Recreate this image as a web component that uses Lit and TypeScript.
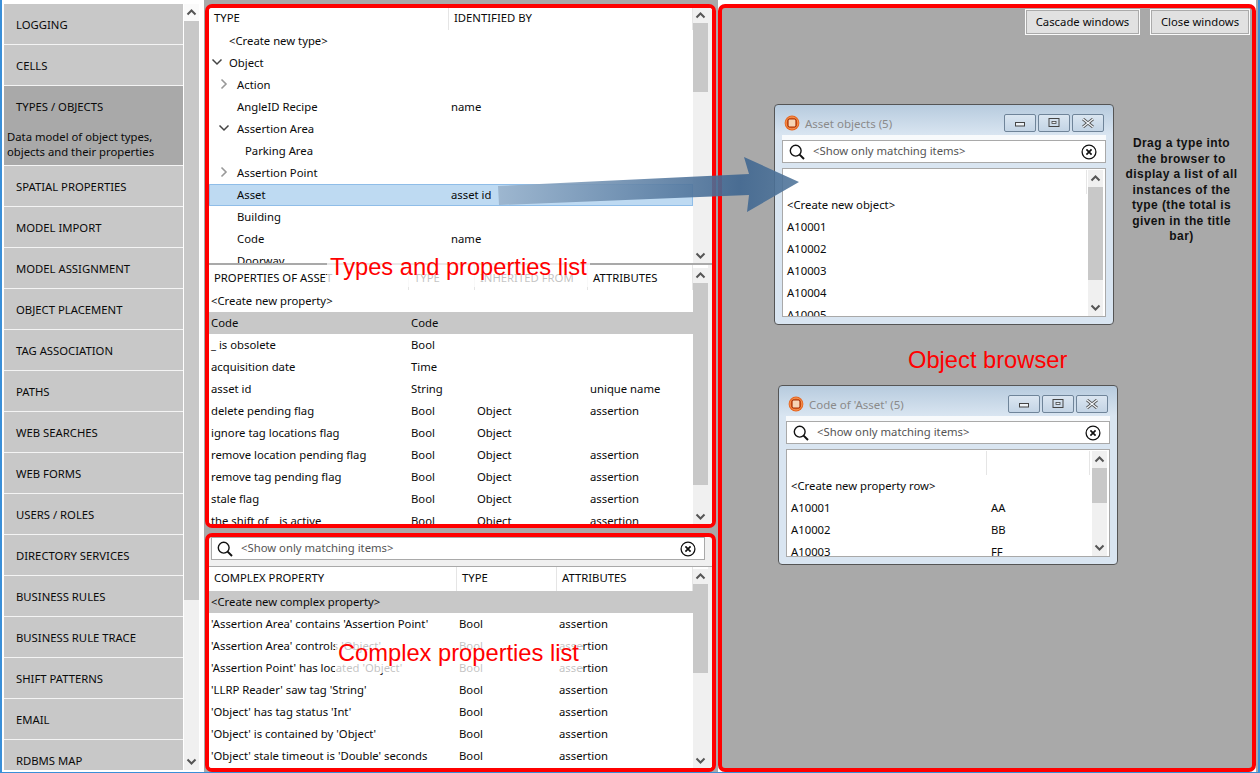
import { LitElement, html, css, svg, nothing } from "lit";
import { customElement } from "lit/decorators.js";

const nav = ["LOGGING","CELLS","TYPES / OBJECTS","SPATIAL PROPERTIES","MODEL IMPORT","MODEL ASSIGNMENT","OBJECT PLACEMENT","TAG ASSOCIATION","PATHS","WEB SEARCHES","WEB FORMS","USERS / ROLES","DIRECTORY SERVICES","BUSINESS RULES","BUSINESS RULE TRACE","SHIFT PATTERNS","EMAIL","RDBMS MAP"];

type Tree = { t: string; v?: string; lvl: number; chev?: "open" | "closed"; sel?: boolean };
const tree: Tree[] = [
  { t: "<Create new type>", lvl: 1 },
  { t: "Object", lvl: 1, chev: "open" },
  { t: "Action", lvl: 2, chev: "closed" },
  { t: "AngleID Recipe", v: "name", lvl: 2 },
  { t: "Assertion Area", lvl: 2, chev: "open" },
  { t: "Parking Area", lvl: 3 },
  { t: "Assertion Point", lvl: 2, chev: "closed" },
  { t: "Asset", v: "asset id", lvl: 2, sel: true },
  { t: "Building", lvl: 2 },
  { t: "Code", v: "name", lvl: 2 },
  { t: "Doorway", lvl: 2 },
];

const props = [
  ["<Create new property>"],
  ["Code","Code","",""],
  ["_ is obsolete","Bool","",""],
  ["acquisition date","Time","",""],
  ["asset id","String","","unique name"],
  ["delete pending flag","Bool","Object","assertion"],
  ["ignore tag locations flag","Bool","Object",""],
  ["remove location pending flag","Bool","Object","assertion"],
  ["remove tag pending flag","Bool","Object","assertion"],
  ["stale flag","Bool","Object","assertion"],
  ["the shift of _ is active","Bool","Object","assertion"],
];

const complex = [
  ["<Create new complex property>"],
  ["'Assertion Area' contains 'Assertion Point'","Bool","assertion"],
  ["'Assertion Area' controls 'Object'","Bool","assertion"],
  ["'Assertion Point' has located 'Object'","Bool","assertion"],
  ["'LLRP Reader' saw tag 'String'","Bool","assertion"],
  ["'Object' has tag status 'Int'","Bool","assertion"],
  ["'Object' is contained by 'Object'","Bool","assertion"],
  ["'Object' stale timeout is 'Double' seconds","Bool","assertion"],
];

const chevUp = html`<svg class="ch" viewBox="0 0 15 15"><path d="M3.5 9.5 7.5 5.5 11.5 9.5" fill="none" stroke="#555" stroke-width="2"/></svg>`;
const chevDown = html`<svg class="ch" viewBox="0 0 15 15"><path d="M3.5 5.5 7.5 9.5 11.5 5.5" fill="none" stroke="#555" stroke-width="2"/></svg>`;

const searchIcon = html`<svg class="mag" viewBox="0 0 16 16"><circle cx="6.7" cy="6.7" r="5.4" fill="none" stroke="#111" stroke-width="1.4"/><path d="M10.6 10.6 15 15" stroke="#111" stroke-width="2"/></svg>`;
const clearIcon = html`<svg class="clr" viewBox="0 0 16 16"><circle cx="8" cy="8" r="6.9" fill="none" stroke="#111" stroke-width="1.3"/><path d="M5.4 5.4 10.6 10.6M10.6 5.4 5.4 10.6" stroke="#111" stroke-width="1.7"/></svg>`;

const appIcon = html`<svg class="appicon" viewBox="0 0 16 16"><circle cx="8" cy="8" r="7.4" fill="#e8641c"/><circle cx="8" cy="8" r="6" fill="none" stroke="#f49a5c" stroke-width="1"/><rect x="4" y="4" width="8" height="8" rx="1.5" fill="#f6d5b4" stroke="#a83206" stroke-width="1.2"/></svg>`;

function scrollbar(thumbH: number, cls = "") {
  return html`<div class="sb ${cls}">
    <div class="sb-btn">${chevUp}</div>
    <div class="sb-thumb" style="height:${thumbH}px"></div>
    <div class="sb-track"></div>
    <div class="sb-btn">${chevDown}</div>
  </div>`;
}

function search() {
  return html`<div class="search">${searchIcon}<span class="search-text">&lt;Show only matching items&gt;</span>${clearIcon}</div>`;
}

function cols(c: number[]) {
  return c.map((n) => n + "px").join(" ");
}

function win(title: string, top: number, left: number, height: number, body: unknown) {
  return html`<div class="win" style="top:${top}px;left:${left}px;height:${height}px">
    <div class="win-title">
      ${appIcon}<span class="win-name">${title}</span>
      <div class="win-btns">
        <div class="wb"><svg viewBox="0 0 14 10"><rect x="2.5" y="4.5" width="9" height="3.5" fill="#eef3f8" stroke="#444"/></svg></div>
        <div class="wb"><svg viewBox="0 0 14 10"><rect x="2" y="0.5" width="10" height="8" fill="none" stroke="#444"/><rect x="5" y="3.5" width="4" height="2" fill="#eef3f8" stroke="#444" stroke-width=".8"/></svg></div>
        <div class="wb"><svg viewBox="0 0 14 10"><path d="M2 1 12 9M12 1 2 9" stroke="#555" stroke-width="3"/><path d="M2 1 12 9M12 1 2 9" stroke="#eef3f8" stroke-width="1.3"/></svg></div>
      </div>
    </div>
    <div class="win-band"></div>
    ${search()}
    ${body}
  </div>`;
}

@customElement("app-root")
export class AppRoot extends LitElement {
  static styles = css`
    :host {
      display: block; height: 773px; width: 1260px; position: relative; overflow: hidden;
      font-family: "Noto Sans", "Open Sans", sans-serif; font-size: 11.3px; color: #0a0a0a;
    }
    .root {
      height: 772px; display: flex; background: #fff;
      border-left: 2px solid #3a8fd8; border-right: 2px solid #3a8fd8; border-bottom: 1px solid #3a8fd8;
      box-sizing: content-box; width: 1256px;
    }
    .side { width: 198px; margin: 4px 0 2px 2px; display: flex; gap: 1px; height: 766px; flex: none; }
    .nav { width: 179px; overflow: hidden; flex: none; }
    .nav-item {
      height: 41px; box-sizing: border-box; background: #c8c8c8; border-bottom: 1px solid #f4f4f4;
      padding: 0 0 0 12px; display: flex; align-items: center;
    }
    .nav-item.sel { height: 80px; background: #a9a9a9; display: block; padding: 0; }
    .nav-head { height: 41px; padding-left: 12px; display: flex; align-items: center; }
    .nav-desc { padding-left: 3px; line-height: 15px; margin-top: 2px; }
    .sb { width: 15px; display: flex; flex-direction: column; background: #f0f0f0; flex: none; }
    .sb-btn { height: 15px; display: flex; align-items: center; justify-content: center; flex: none; background: #f0f0f0; }
    .side .sb-btn, .win .sb-btn { height: 17px; }
    .side .sb-btn:first-child { background: #fafafa; }
    .sb-thumb { background: #c8c8c8; flex: none; }
    .sb-track { flex: 1; }
    .ch { width: 15px; height: 15px; display: block; }
    .mid { width: 514px; flex: none; margin-left: 2px; background: #a9a9a9; display: flex; flex-direction: column; gap: 5px; padding: 4px 2px 0 1px; box-sizing: border-box; }
    .box { border: 4px solid #f00; border-radius: 7px; box-sizing: border-box; background: #f0f0f0; display: flex; flex-direction: column; overflow: hidden; }
    .box1 { height: 524px; }
    .box2 { height: 239px; }
    .split { height: 2px; background: #a9a9a9; flex: none; }
    .pane { display: flex; background: #fff; overflow: hidden; flex: none; }
    .pane1 { height: 255px; }
    .pane2 { flex: 1; }
    .pane3 { flex: 1; margin-top: 6px; border-top: 1px solid #a9a9a9; }
    .list { width: 484px; flex: none; overflow: hidden; display: flex; flex-direction: column; }
    .pane2 .sb { margin-top: 3px; }
    .pane3 .sb { margin-top: 2px; }
    .pane-gutter { width: 3px; background: #f0f0f0; flex: 1; }
    .hdr { display: grid; height: 22px; flex: none; }
    .hc { height: 100%; display: flex; align-items: center; padding: 0 0 4px 5px; border-right: 1px solid #e5e5e5; box-sizing: border-box; white-space: nowrap; overflow: hidden; }
    .pane2 .hdr { height: 25px; }
    .pane2 .hc { padding-bottom: 1px; }
    .pane3 .hdr { height: 24px; }
    .pane3 .hc { padding-bottom: 3px; }
    .row { display: grid; height: 22px; flex: none; align-items: center; white-space: nowrap; box-sizing: border-box; padding-bottom: 2px; }
    .row.gray { background: #c8c8c8; }
    .row.sel { background: #bedaf2; box-shadow: inset 0 0 0 1px #8fbde8; }
    .cell { padding-left: 2px; overflow: visible; white-space: nowrap; }
    .tree-cell { position: relative; display: flex; align-items: center; }
    .l1 { padding-left: 20px; }
    .l2 { padding-left: 28px; }
    .l3 { padding-left: 36px; }
    .tc { width: 12px; height: 12px; margin-left: -19px; margin-right: 7px; flex: none; }
    .l1 .tc { margin-left: -18px; margin-right: 6px; }
    .search {
      display: flex; align-items: center; height: 23px; background: #fff; border: 1px solid #a9a9a9;
      box-sizing: border-box; flex: none; padding: 0 8px 0 6px;
    }
    .mag { width: 16px; height: 16px; flex: none; }
    .clr { width: 16px; height: 16px; flex: none; }
    .search-text { flex: 1; color: #555; margin: -2px 0 0 8px; }
    .box2 .search { margin: 0 7px 0 2px; padding-left: 5px; }
    .right {
      width: 538px; margin-left: 0; flex: none; border: 4px solid #f00; border-radius: 7px; margin-top: 4px;
      height: 768px; background: #a9a9a9; box-sizing: border-box; display: flex; flex-direction: column;
      position: relative;
    }
    .outer-right { background: #a9a9a9; flex: 1; }
    .toolbar { display: flex; justify-content: flex-end; gap: 10px; padding: 1px 2px 0 0; }
    .btn { height: 26px; box-sizing: border-box; border: 1px solid #fafafa; background: #e1e1e1; box-shadow: inset 0 0 0 1px #aaa; display: flex; align-items: center; justify-content: center; padding-bottom: 1px; }
    .btn.a { width: 115px; }
    .btn.b { width: 100px; }
    .win {
      position: absolute; width: 340px; box-sizing: border-box; border: 1px solid #555; border-radius: 4px;
      background: #d9e5f1; padding: 0 7px; display: flex; flex-direction: column; overflow: hidden;
      background-image: linear-gradient(#b7cbde, #d9e5f1 30px);
    }
    .win-title { height: 30px; display: flex; align-items: center; flex: none; padding: 6px 0 0 2px; box-sizing: border-box; }
    .appicon { width: 16px; height: 16px; flex: none; }
    .win-name { color: #8a8a8a; margin-left: 5px; font-size: 11.5px; flex: 1; }
    .win-btns { display: flex; gap: 2px; padding-right: 2px; margin-top: -1px; }
    .wb { width: 32px; height: 18px; box-sizing: border-box; border: 1px solid #6f8499; border-radius: 2px; background: linear-gradient(#dbe6f1, #c3d4e5); display: flex; align-items: center; justify-content: center; }
    .wb svg { width: 14px; height: 10px; display: block; }
    .win-band { height: 5px; background: #f8fafc; flex: none; }
    .win-list { margin-top: 5px; margin-bottom: 7px; flex: 1; min-height: 0; border: 1px solid #a9a9a9; background: #fff; display: flex; overflow: hidden; padding: 1px 2px 0 0; }
    .win-rows { flex: 1; overflow: hidden; display: flex; flex-direction: column; min-width: 0; }
    .win-hdr { display: grid; height: 24px; flex: none; }
    .win-hc { border-right: 1px solid #e5e5e5; }
    .win-list .cell { padding-left: 4px; }
    .win-list .sb { height: 100%; margin-bottom: 1px; }
    .note { position: absolute; top: 136px; left: 1123px; width: 117px; text-align: center; font: bold 12px/15.55px "Liberation Sans", Arial, sans-serif; letter-spacing: .4px; color: #111; }
    .anno { position: absolute; font: 23.7px/27px "Liberation Sans", Arial, sans-serif; color: #f00; white-space: nowrap; background: rgba(255,255,255,.75); padding: 0 3px 6px; }
    .anno.plain { background: none; padding: 0; }
    .arrow { position: absolute; left: 0; top: 0; width: 1260px; height: 773px; pointer-events: none; }
  `;

  render() {
    const tc = [240, 244];
    const pc = [200, 66, 113, 105];
    const cc = [248, 100, 136];
    return html`<div class="root">
      <div class="side">
        <div class="nav">
          ${nav.map((n) =>
            n === "TYPES / OBJECTS"
              ? html`<div class="nav-item sel"><div class="nav-head">${n}</div><div class="nav-desc">Data model of object types,<br />objects and their properties</div></div>`
              : html`<div class="nav-item">${n}</div>`
          )}
        </div>
        ${scrollbar(579)}
      </div>
      <div class="mid">
        <div class="box box1">
          <div class="pane pane1">
            <div class="list">
              <div class="hdr" style="grid-template-columns:${cols(tc)}"><div class="hc">TYPE</div><div class="hc">IDENTIFIED BY</div></div>
              ${tree.map((r) => html`<div class="row ${r.sel ? "sel" : ""}" style="grid-template-columns:${cols(tc)}">
                <div class="tree-cell l${r.lvl}">${r.chev
                  ? html`<svg class="tc" viewBox="0 0 12 12">${r.chev === "open"
                      ? svg`<path d="M1.5 3.5 6 8 10.5 3.5" fill="none" stroke="#444" stroke-width="1.5"/>`
                      : svg`<path d="M3.5 1.5 8 6 3.5 10.5" fill="none" stroke="#999" stroke-width="1.6"/>`}</svg>`
                  : nothing}<span>${r.t}</span></div>
                <div class="cell">${r.v ?? ""}</div>
              </div>`)}
            </div>
            ${scrollbar(69)}
            <div class="pane-gutter"></div>
          </div>
          <div class="split"></div>
          <div class="pane pane2">
            <div class="list">
              <div class="hdr" style="grid-template-columns:${cols(pc)}"><div class="hc">PROPERTIES OF ASSET</div><div class="hc">TYPE</div><div class="hc">INHERITED FROM</div><div class="hc">ATTRIBUTES</div></div>
              ${props.map((r) => html`<div class="row ${r[0] === "Code" ? "gray" : ""}" style="grid-template-columns:${cols(pc)}">
                ${r.map((c) => html`<div class="cell">${c}</div>`)}
              </div>`)}
            </div>
            ${scrollbar(202)}
            <div class="pane-gutter"></div>
          </div>
        </div>
        <div class="box box2">
          ${search()}
          <div class="pane pane3">
            <div class="list">
              <div class="hdr" style="grid-template-columns:${cols(cc)}"><div class="hc">COMPLEX PROPERTY</div><div class="hc">TYPE</div><div class="hc">ATTRIBUTES</div></div>
              ${complex.map((r, i) => html`<div class="row ${i === 0 ? "gray" : ""}" style="grid-template-columns:${cols(cc)}">
                ${r.map((c) => html`<div class="cell">${c}</div>`)}
              </div>`)}
            </div>
            ${scrollbar(89)}
            <div class="pane-gutter"></div>
          </div>
        </div>
      </div>
      <div class="right">
        <div class="toolbar"><div class="btn a">Cascade windows</div><div class="btn b">Close windows</div></div>
        ${win("Asset objects (5)", 96, 52, 221, html`<div class="win-list">
          <div class="win-rows">
            <div class="win-hdr" style="grid-template-columns:304px"><div class="win-hc"></div></div>
            ${["<Create new object>","A10001","A10002","A10003","A10004","A10005"].map((t) => html`<div class="row"><div class="cell">${t}</div></div>`)}
          </div>
          ${scrollbar(93)}
        </div>`)}
        ${win("Code of 'Asset' (5)", 377, 56, 180, html`<div class="win-list">
          <div class="win-rows">
            <div class="win-hdr" style="grid-template-columns:200px 103px"><div class="win-hc"></div><div class="win-hc"></div></div>
            ${[["<Create new property row>",""],["A10001","AA"],["A10002","BB"],["A10003","FF"]].map((r) => html`<div class="row" style="grid-template-columns:200px 103px"><div class="cell">${r[0]}</div><div class="cell">${r[1]}</div></div>`)}
          </div>
          ${scrollbar(35)}
        </div>`)}
      </div>
      <div class="outer-right"></div>
    </div>
    <div class="note">Drag a type into the browser to display a list of all instances of the type (the total is given in the title bar)</div>
    <div class="anno" style="left:327px;top:254px">Types and properties list</div>
    <div class="anno" style="left:335px;top:640px">Complex properties list</div>
    <div class="anno plain" style="left:908px;top:347px">Object browser</div>
    <svg class="arrow" viewBox="0 0 1260 773">
      <defs><linearGradient id="ag" x1="498" y1="180" x2="800" y2="195" gradientUnits="userSpaceOnUse">
        <stop offset="0" stop-color="#9ab3cc" stop-opacity=".9"/><stop offset=".8" stop-color="#3f6690" stop-opacity=".9"/><stop offset="1" stop-color="#54789c" stop-opacity=".9"/>
      </linearGradient></defs>
      <polygon points="498,186 749,174 744,157 799,182 747,212 749,195 499,205" fill="url(#ag)"/>
    </svg>`;
  }
}
